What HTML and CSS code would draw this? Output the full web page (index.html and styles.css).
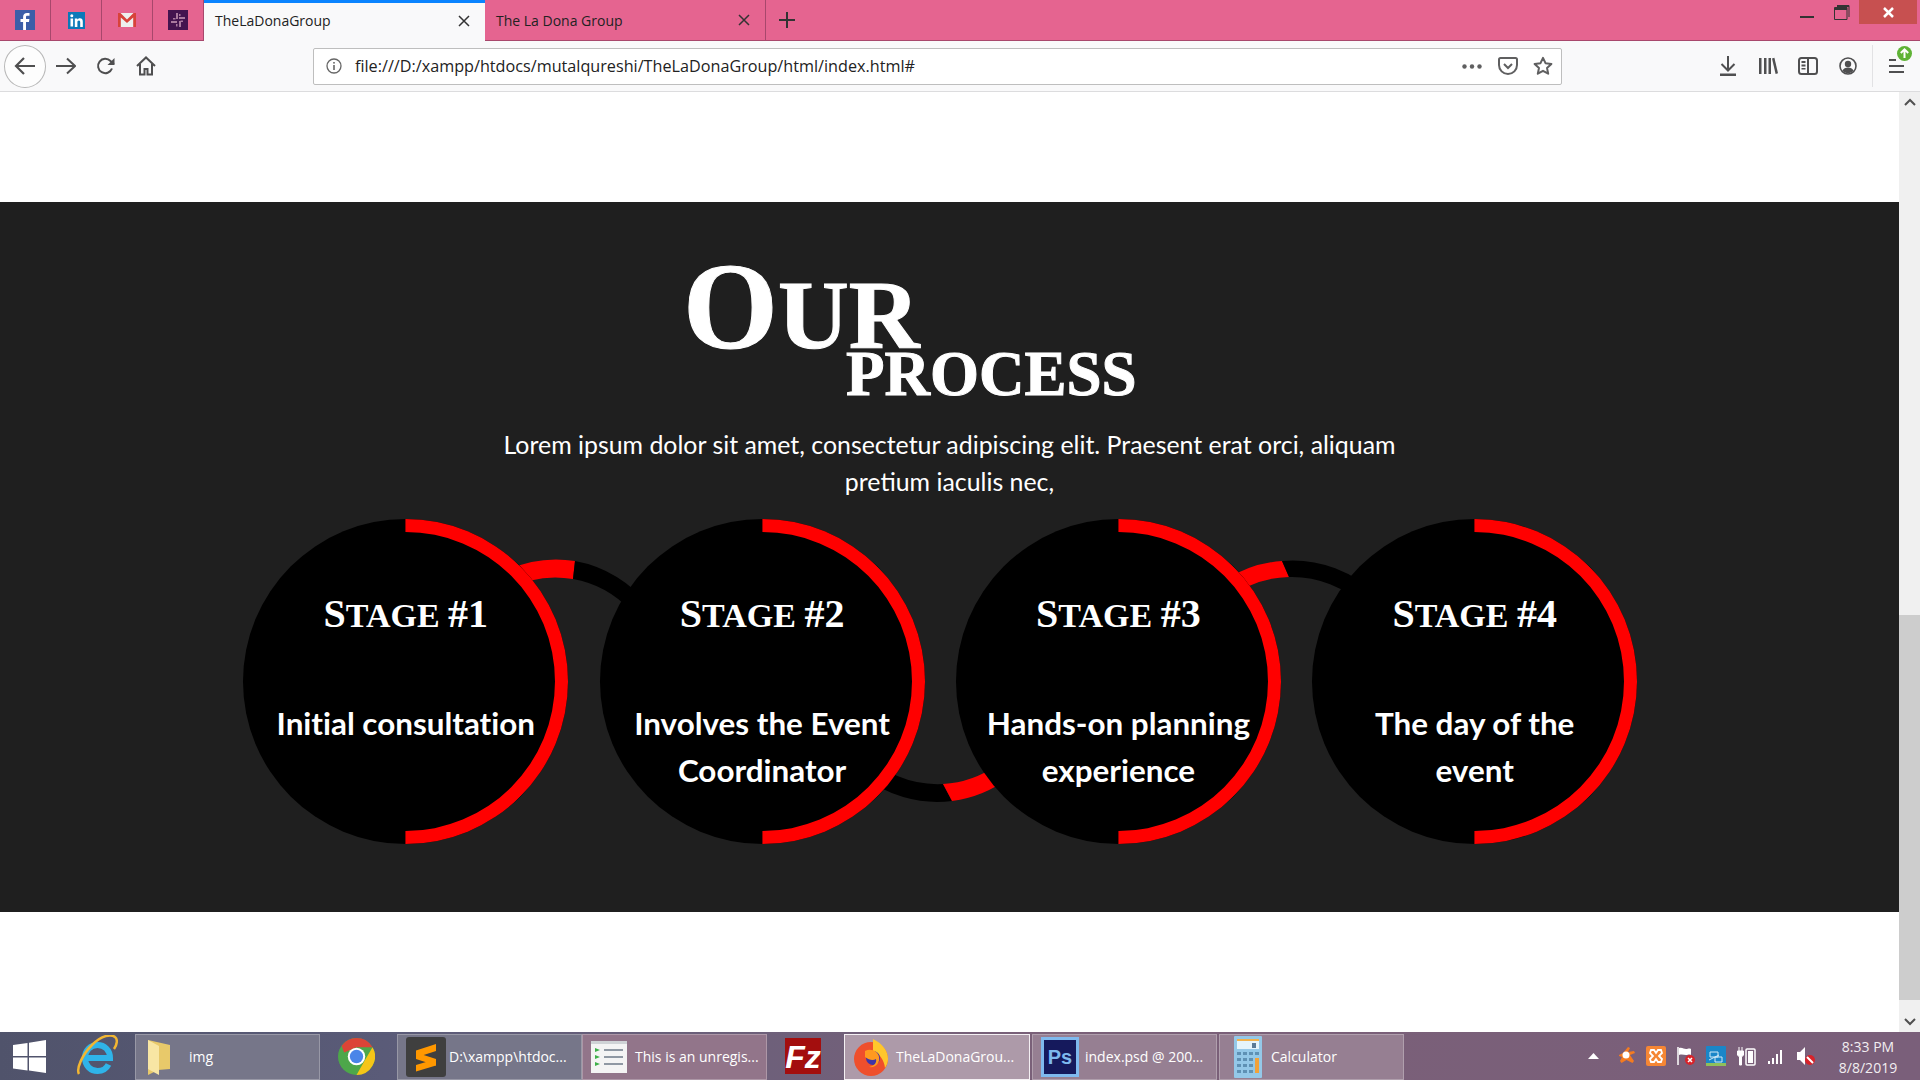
FILE: index.html
```html
<!DOCTYPE html>
<html lang="en">

<head>
    <meta charset="UTF-8" />
    <meta name="viewport" content="width=device-width, initial-scale=1.0" />
    <title>TheLaDonaGroup</title>
    <link rel="stylesheet" href="styles.css">
</head>

<body>
    <div class="page">
        <!-- browser tabs -->
        <div class="tabbar">
            <div class="pinned">
                <svg width="20" height="20" viewBox="0 0 20 20"><rect width="20" height="20" fill="#3b5ea8"/><path d="M11 20v-8h3l.4-3H11V7.200c0-.9.300-1.400 1.500-1.400h2V3.100C14 3 13.100 3 12 3 9.700 3 8.100 4.400 8.100 7v2H5.500v3h2.600v8z" fill="#fff"/></svg>
            </div>
            <div class="pinned">
                <svg width="17" height="17" viewBox="0 0 17 17"><rect width="17" height="17" fill="#0b79b8"/><rect x="2.500" y="6.500" width="2.600" height="8" fill="#fff"/><circle cx="3.800" cy="3.800" r="1.500" fill="#fff"/><path d="M6.800 6.500h2.500v1.200c.5-.8 1.400-1.400 2.600-1.400 2.200 0 2.900 1.400 2.900 3.500v5.200h-2.600V10.300c0-1-.3-1.800-1.300-1.800-1.100 0-1.500.8-1.500 1.800v4.700H6.800z" fill="#fff"/></svg>
            </div>
            <div class="pinned">
                <svg width="18" height="14" viewBox="0 0 18 14"><rect width="18" height="14" fill="#eee"/><path d="M0 0h2.500L9 6.500 15.500 0H18v14h-2.800V4.500L9 10 2.800 4.500V14H0z" fill="#d8423a"/></svg>
            </div>
            <div class="pinned">
                <svg width="20" height="20" viewBox="0 0 20 20"><rect width="20" height="20" fill="#43134f"/><g fill="#a9799f"><rect x="8" y="3" width="2" height="6"/><rect x="11" y="11" width="2" height="6"/><rect x="3" y="11" width="6" height="2"/><rect x="11" y="7" width="6" height="2"/><rect x="5" y="8" width="2.500" height="1.500"/><rect x="12.500" y="10.500" width="2.500" height="1.500"/><rect x="8" y="14" width="1.500" height="2.500"/><rect x="11" y="4" width="1.500" height="2"/></g></svg>
            </div>
            <div class="tab tab-active">
                <span class="tab-title">TheLaDonaGroup</span>
                <svg class="tab-close" width="12" height="12" viewBox="0 0 12 12"><path d="M1 1l10 10M11 1L1 11" stroke="#333" stroke-width="1.500"/></svg>
            </div>
            <div class="tab">
                <span class="tab-title">The La Dona Group</span>
                <svg class="tab-close" width="12" height="12" viewBox="0 0 12 12"><path d="M1 1l10 10M11 1L1 11" stroke="#333" stroke-width="1.500"/></svg>
            </div>
            <div class="new-tab">
                <svg width="18" height="18" viewBox="0 0 18 18"><path d="M9 1v16M1 9h16" stroke="#333" stroke-width="2"/></svg>
            </div>
            <div class="window-controls">
                <svg class="win-min" width="14" height="2" viewBox="0 0 14 2"><rect width="14" height="2" fill="#333"/></svg>
                <svg class="win-max" width="16" height="16" viewBox="0 0 16 16"><path d="M3 1.500h12V13M.5 3.500h12.500v12H.5z" fill="none" stroke="#333"/><rect x="1" y="4" width="12" height="2" fill="#333"/><rect x="3" y="1" width="12" height="2" fill="#333"/></svg>
                <div class="win-close">
                    <svg width="11" height="11" viewBox="0 0 11 11"><path d="M1 1l9 9M10 1l-9 9" stroke="#fff" stroke-width="2.500"/></svg>
                </div>
            </div>
        </div>

        <!-- address bar -->
        <div class="toolbar">
            <div class="back-btn">
                <svg width="22" height="20" viewBox="0 0 22 20"><path d="M10 2L2 10l8 8M2 10h19" fill="none" stroke="#4f4f50" stroke-width="2.200"/></svg>
            </div>
            <div class="tool-icon">
                <svg width="20" height="18" viewBox="0 0 20 18"><path d="M11 1.500L19 9l-8 7.500M19 9H0" fill="none" stroke="#4f4f50" stroke-width="2"/></svg>
            </div>
            <div class="tool-icon">
                <svg width="20" height="20" viewBox="0 0 20 20"><path d="M16 12.500A7.200 7.200 0 1 1 14.500 5L18 8" fill="none" stroke="#4f4f50" stroke-width="2"/><path d="M18.500 2v7h-7z" fill="#4f4f50"/></svg>
            </div>
            <div class="tool-icon">
                <svg width="20" height="20" viewBox="0 0 20 20"><path d="M1 10l9-8.500 9 8.500M4 8v10.500h4.500V13h3v5.500H16V8" fill="none" stroke="#4f4f50" stroke-width="2"/></svg>
            </div>

            <div class="urlbar">
                <svg class="url-info" width="16" height="16" viewBox="0 0 16 16"><circle cx="8" cy="8" r="7" fill="none" stroke="#666" stroke-width="1.300"/><rect x="7.200" y="7" width="1.600" height="5" fill="#666"/><rect x="7.200" y="4" width="1.600" height="1.600" fill="#666"/></svg>
                <span class="url-text">file:///D:/xampp/htdocs/mutalqureshi/TheLaDonaGroup/html/index.html#</span>
                <svg class="url-dots" width="20" height="5" viewBox="0 0 20 5"><circle cx="2.500" cy="2.500" r="2.200" fill="#5f5f60"/><circle cx="10" cy="2.500" r="2.200" fill="#5f5f60"/><circle cx="17.500" cy="2.500" r="2.200" fill="#5f5f60"/></svg>
                <svg class="url-pocket" width="20" height="18" viewBox="0 0 20 18"><path d="M2.500 1h15c.8 0 1.500.7 1.500 1.500V8c0 5-4 9-9 9S1 13 1 8V2.500C1 1.700 1.700 1 2.500 1z" fill="none" stroke="#5f5f60" stroke-width="2"/><path d="M6 7l4 4 4-4" fill="none" stroke="#5f5f60" stroke-width="2"/></svg>
                <svg class="url-star" width="20" height="20" viewBox="0 0 20 20"><path d="M10 1.800l2.500 5.400 5.900.7-4.400 4 1.200 5.800L10 14.800l-5.200 2.900L6 11.900l-4.400-4 5.900-.7z" fill="none" stroke="#5f5f60" stroke-width="2" stroke-linejoin="round"/></svg>
            </div>

            <div class="tool-right">
                <div class="tool-icon">
                    <svg width="18" height="20" viewBox="0 0 18 20"><path d="M9 0v14M2.500 8L9 14.500 15.500 8" fill="none" stroke="#4f4f50" stroke-width="2"/><rect x="1" y="17.500" width="16" height="2.500" fill="#4f4f50"/></svg>
                </div>
                <div class="tool-icon">
                    <svg width="20" height="18" viewBox="0 0 20 18"><g fill="#4f4f50"><rect x="1" y="1" width="2.500" height="16"/><rect x="6" y="1" width="2.500" height="16"/><rect x="10.500" y="1" width="2.500" height="16"/><path d="M14 1.500l2.400-.7 3.600 15.500-2.400.7z"/></g></svg>
                </div>
                <div class="tool-icon">
                    <svg width="20" height="18" viewBox="0 0 20 18"><rect x="1" y="1" width="18" height="16" rx="2.500" fill="none" stroke="#4f4f50" stroke-width="2"/><rect x="9" y="1" width="2" height="16" fill="#4f4f50"/><path d="M3.500 4h4v2h-4zM3.500 7.500h4v2h-4zM3.500 11h4v1.500h-4z" fill="#4f4f50"/></svg>
                </div>
                <div class="tool-icon">
                    <svg width="18" height="18" viewBox="0 0 18 18"><circle cx="9" cy="9" r="8" fill="none" stroke="#4f4f50" stroke-width="1.600"/><circle cx="9" cy="7" r="3.200" fill="#4f4f50"/><path d="M3.500 13.500c1-2 3-3 5.500-3s4.500 1 5.500 3C13 15.500 11 16 9 16s-4-.5-5.500-2.500z" fill="#4f4f50"/></svg>
                </div>
                <div class="tool-sep"></div>
                <div class="menu-btn">
                    <svg width="16" height="16" viewBox="0 0 16 16"><rect y="1" width="7" height="2" fill="#4f4f50"/><rect y="7" width="15" height="2" fill="#4f4f50"/><rect y="13" width="15" height="2" fill="#4f4f50"/></svg>
                    <svg class="menu-badge" width="15" height="15" viewBox="0 0 15 15"><circle cx="7.500" cy="7.500" r="7.500" fill="#5fb336"/><path d="M7.500 12V3.500M3.800 7l3.700-3.700L11.200 7" fill="none" stroke="#fff" stroke-width="2"/></svg>
                </div>
            </div>
        </div>

        <!-- page -->
        <div class="viewport">
            <div class="content">
                <section class="process">
                    <h2 class="process-title">
                        <span class="title-our"><span class="title-o">O</span>ur</span>
                        <span class="title-process">Process</span>
                    </h2>
                    <p class="process-text">Lorem ipsum dolor sit amet, consectetur adipiscing elit. Praesent erat orci, aliquam<br>pretium iaculis nec,</p>

                    <div class="stages">
                        <!-- arcs running behind the circles -->
                        <svg class="links" width="1400" height="330" viewBox="243 519 1400 330">
                            <path d="M505 571A121 121 0 0 1 575 561L573 579A103 103 0 0 0 505 591Z" fill="#f00"/>
                            <path d="M575 561A121 121 0 0 1 650 607L630 610A103 103 0 0 0 573 579Z" fill="#000"/>
                            <path d="M860 774A121 121 0 0 0 952 801L943 784A103 103 0 0 1 860 749Z" fill="#000"/>
                            <path d="M952 801A121 121 0 0 0 1010 777L997 765A103 103 0 0 1 943 784Z" fill="#f00"/>
                            <path d="M1225 580A121 121 0 0 1 1282 561L1289 577A104 104 0 0 0 1225 601Z" fill="#f00"/>
                            <path d="M1282 561A121 121 0 0 1 1380 598L1365 607A104 104 0 0 0 1289 577Z" fill="#000"/>
                        </svg>

                        <div class="stage">
                            <h3 class="stage-title"><span class="cap">S</span>tage <span class="cap">#1</span></h3>
                            <p class="stage-text">Initial consultation</p>
                        </div>
                        <div class="stage">
                            <h3 class="stage-title"><span class="cap">S</span>tage <span class="cap">#2</span></h3>
                            <p class="stage-text">Involves the Event Coordinator</p>
                        </div>
                        <div class="stage">
                            <h3 class="stage-title"><span class="cap">S</span>tage <span class="cap">#3</span></h3>
                            <p class="stage-text">Hands-on planning experience</p>
                        </div>
                        <div class="stage">
                            <h3 class="stage-title"><span class="cap">S</span>tage <span class="cap">#4</span></h3>
                            <p class="stage-text">The day of the event</p>
                        </div>
                    </div>
                </section>
            </div>
            <div class="scrollbar">
                <div class="scroll-arrow"><svg width="12" height="8" viewBox="0 0 12 8"><path d="M1 7l5-5 5 5" fill="none" stroke="#505050" stroke-width="2"/></svg></div>
                <div class="scroll-track"><div class="scroll-thumb"></div></div>
                <div class="scroll-arrow"><svg width="12" height="8" viewBox="0 0 12 8"><path d="M1 1l5 5 5-5" fill="none" stroke="#505050" stroke-width="2"/></svg></div>
            </div>
        </div>

        <!-- windows taskbar -->
        <div class="taskbar">
            <div class="task-start">
                <svg width="33" height="33" viewBox="0 0 33 33"><path d="M0 5l14.500-2v13H0zM16 2.800L33 0v16H16zM0 17.500h14.500v13L0 28.500zM16 17.500h17V33l-17-2.500z" fill="#fff"/></svg>
            </div>
            <div class="task-pin task-pin-ie">
                <svg width="42" height="42" viewBox="0 0 42 42"><path d="M9 23h25c0-8-5.500-13-12.500-13S9 15.500 9 23s5.500 13 12.500 13c5 0 9-2.500 11-6.500" fill="none" stroke="#2fb4e9" stroke-width="6"/><path d="M3 39C0 34 6 20 16 10S35-1 39 2c3 2 2 8-1 12" fill="none" stroke="#f2b632" stroke-width="2.500"/></svg>
            </div>
            <div class="task-item task-item-dark task-img">
                <svg width="28" height="36" viewBox="0 0 28 36"><path d="M2 1l22 5v24l-12 1-10 5z" fill="#e8c96a"/><path d="M2 1l11 6v29L2 30z" fill="#f8e6a4"/></svg>
                <span>img</span>
            </div>
            <div class="task-pin task-pin-chrome">
                <svg width="37" height="37" viewBox="0 0 36 36"><circle cx="18" cy="18" r="18" fill="#4da74a"/><path d="M18 0a18 18 0 0 1 15.600 9L18 9 6 14 3.500 7.500A18 18 0 0 1 18 0z" fill="#dc4437"/><path d="M33.600 9A18 18 0 0 1 18 36l8-14z" fill="#f5c518"/><circle cx="18" cy="18" r="8.500" fill="#fff"/><circle cx="18" cy="18" r="6.500" fill="#4a85e8"/></svg>
            </div>
            <div class="task-item task-item-dark task-sublime">
                <svg width="40" height="40" viewBox="0 0 40 40"><rect width="40" height="40" rx="3" fill="#3f3f3f"/><g fill="#ff9800"><path d="M30 7L10 13.500v7L30 14z"/><path d="M10 15.500l20 6.500v6.500l-20-6.500z"/><path d="M30 22L10 28v6.500l20-6z"/></g></svg>
                <span>D:\xampp\htdoc...</span>
            </div>
            <div class="task-item task-item-mid task-notes">
                <svg width="36" height="32" viewBox="0 0 36 32"><rect width="36" height="32" fill="#f4f4f4"/><rect width="36" height="3" fill="#cfd3d6"/><g fill="#8f98a3"><rect x="13" y="8" width="19" height="2"/><rect x="13" y="15" width="19" height="2"/><rect x="13" y="22" width="19" height="2"/></g><g fill="#3eb04a"><path d="M4 7l5 2-5 2zM4 14l5 2-5 2zM4 21l5 2-5 2z"/></g></svg>
                <span>This is an unregis...</span>
            </div>
            <div class="task-pin task-pin-fz">
                <svg width="36" height="36" viewBox="0 0 36 36"><rect width="36" height="36" fill="#a30e0e"/><text x="18" y="30" class="fz-letters">Fz</text></svg>
            </div>
            <div class="task-item task-item-active">
                <svg width="36" height="38" viewBox="0 0 36 38"><circle cx="18" cy="21" r="17" fill="#ef4f2c"/><path d="M20 1c10 5 15 12 15 20 0 3-1 6-3 9-1-8-5-14-12-17z" fill="#ffc72c"/><circle cx="20" cy="20" r="7" fill="#3f35a8"/><path d="M12 13c6-3 13 0 14 6s-3 11-10 10c5-1 8-4 7-8-3 2-7 1-11-2z" fill="#ff9a1f"/></svg>
                <span>TheLaDonaGrou...</span>
            </div>
            <div class="task-item task-item-light task-ps">
                <svg width="38" height="40" viewBox="0 0 38 40"><rect width="38" height="40" fill="#7fb9ee"/><rect x="3" y="3" width="32" height="34" fill="#15195c"/><text x="19" y="27" class="ps-letters">Ps</text></svg>
                <span>index.psd @ 200...</span>
            </div>
            <div class="task-item task-item-light task-calc">
                <svg width="28" height="42" viewBox="0 0 28 42"><rect width="28" height="42" rx="1" fill="#94c8e8"/><rect x="3" y="3" width="22" height="10" fill="#e5f4fb"/><rect x="3" y="3" width="22" height="2" fill="#f2b24d"/><rect x="18" y="7" width="4" height="5" fill="#5a7a96"/><g fill="#5f91b4"><rect x="3" y="16" width="4" height="3"/><rect x="9" y="16" width="4" height="3"/><rect x="15" y="16" width="4" height="3"/><rect x="21" y="16" width="4" height="3"/><rect x="3" y="22" width="4" height="3"/><rect x="9" y="22" width="4" height="3"/><rect x="15" y="22" width="4" height="3"/><rect x="3" y="28" width="4" height="3"/><rect x="9" y="28" width="4" height="3"/><rect x="15" y="28" width="4" height="3"/><rect x="3" y="34" width="4" height="3"/><rect x="9" y="34" width="4" height="3"/><rect x="15" y="34" width="4" height="3"/></g><rect x="21" y="22" width="4" height="15" fill="#f2a23a"/></svg>
                <span>Calculator</span>
            </div>

            <div class="tray">
                <svg class="tray-arrow" width="11" height="6" viewBox="0 0 11 6"><path d="M5.500 0L11 6H0z" fill="#fff"/></svg>
                <svg class="tray-icon" width="20" height="20" viewBox="0 0 20 20"><path d="M3 9l4-2 5-6 2 1-2 4 6-1 1 2-5 2 4 6-1.500 2-6-3-5 3-1.500-2 2-4-3-1z" fill="#f47b20"/><circle cx="10" cy="9" r="3.500" fill="#fff"/></svg>
                <svg class="tray-icon" width="20" height="20" viewBox="0 0 20 20"><rect width="20" height="20" rx="2" fill="#f58634"/><path d="M5 4h3l2 3 2-3h3l1 3-3 3 3 3-1 3h-3l-2-3-2 3H5l-1-3 3-3-3-3z" fill="none" stroke="#fff" stroke-width="1.800"/></svg>
                <svg class="tray-icon" width="20" height="20" viewBox="0 0 20 20"><path d="M2 1v18" stroke="#fff" stroke-width="1.500"/><path d="M3 2c3-1 5 1 7 1s3-1 5 0v6c-2-1-3 0-5 0s-4-1-7 0z" fill="#fff"/><circle cx="14" cy="14" r="5" fill="#d8232a"/><path d="M12 12l4 4M16 12l-4 4" stroke="#fff" stroke-width="1.500"/></svg>
                <svg class="tray-icon" width="20" height="20" viewBox="0 0 20 20"><rect width="20" height="20" rx="1" fill="#1a86c8"/><path d="M3 14l10-5M4 6h8v5H4zM9 11h7v5H9z" fill="none" stroke="#cfe9f7"/><rect y="17" width="20" height="3" fill="#8fbf5a"/></svg>
                <svg class="tray-icon" width="20" height="20" viewBox="0 0 20 20"><path d="M3 1v4M6 1v4M1.500 5h6v4l-2 2v8H3.500v-8l-2-2z" fill="#fff" stroke="#fff"/><rect x="10" y="3" width="9" height="16" rx="1" fill="none" stroke="#fff" stroke-width="1.500"/><rect x="12" y="5" width="5" height="12" fill="#fff"/></svg>
                <svg class="tray-icon" width="20" height="20" viewBox="0 0 20 20"><path d="M2 15h2v3H2zM6 12h2v6H6zM10 8h2v10h-2zM14 4h2v14h-2z" fill="#fff"/></svg>
                <svg class="tray-icon" width="20" height="20" viewBox="0 0 20 20"><path d="M1 6h3l5-5v18l-5-5H1z" fill="#fff"/><circle cx="14" cy="14" r="5" fill="#d8232a"/><path d="M11 11l6 6" stroke="#fff" stroke-width="2"/></svg>
                <div class="clock">
                    <div>8:33 PM</div>
                    <div>8/8/2019</div>
                </div>
            </div>
        </div>
    </div>
</body>

</html>
```

FILE: styles.css
```css
html, body {
    margin: 0;
    padding: 0;
}

body {
    font-family: "Open Sans", sans-serif;
    background-color: #ffffff;
}

.page {
    width: 1920px;
    height: 1080px;
    overflow: hidden;
    display: flex;
    flex-direction: column;
}

/* tabs */
.tabbar {
    height: 40px;
    flex-shrink: 0;
    display: flex;
    background-color: #e56490;
    border-bottom: 1px solid #a8476c;
}

.pinned {
    width: 50px;
    border-right: 1px solid #a8476c;
    display: flex;
    align-items: center;
    justify-content: center;
}

.tab {
    width: 281px;
    padding: 0 15px 0 11px;
    box-sizing: border-box;
    border-right: 1px solid #a8476c;
    display: flex;
    align-items: center;
    justify-content: space-between;
    font-size: 14px;
    color: #222;
}

.tab-active {
    height: 41px;
    padding-bottom: 3px;
    background-color: #f9f9fa;
    border-top: 3px solid #0a84ff;
    border-right: none;
}

.new-tab {
    width: 42px;
    display: flex;
    align-items: center;
    justify-content: center;
}

.window-controls {
    margin-left: auto;
    display: flex;
    align-items: flex-start;
}

.win-min {
    margin: 16px 20px 0 0;
}

.win-max {
    margin: 4px 9px 0 0;
}

.win-close {
    width: 58px;
    height: 24px;
    margin-right: 3px;
    background-color: #c75050;
    display: flex;
    align-items: center;
    justify-content: center;
}

/* address bar */
.toolbar {
    height: 50px;
    flex-shrink: 0;
    display: flex;
    align-items: center;
    background-color: #f9f9fa;
    border-bottom: 1px solid #dcdcde;
}

.back-btn {
    width: 40px;
    height: 41px;
    margin-left: 4px;
    border: 1px solid #b8b8b8;
    border-radius: 50%;
    background-color: #fdfdfd;
    display: flex;
    align-items: center;
    justify-content: center;
}

.tool-icon {
    width: 40px;
    display: flex;
    align-items: center;
    justify-content: center;
}

.urlbar {
    width: 1247px;
    height: 35px;
    margin-left: 147px;
    background-color: #ffffff;
    border: 1px solid #bebebe;
    border-radius: 2px;
    display: flex;
    align-items: center;
}

.url-info {
    margin-left: 12px;
}

.url-text {
    margin-left: 13px;
    font-size: 16.2px;
    color: #222;
    flex: 1;
}

.url-pocket {
    margin-left: 16px;
}

.url-star {
    margin: 0 8px 0 15px;
}

.tool-right {
    margin-left: 146px;
    display: flex;
    align-items: center;
}

.tool-sep {
    width: 1px;
    height: 42px;
    margin-left: 4px;
    background-color: #e2e2e4;
}

.menu-btn {
    position: relative;
    margin-left: 16px;
    display: flex;
}

.menu-badge {
    position: absolute;
    top: -12px;
    left: 8px;
}

/* page area */
.viewport {
    flex: 1;
    min-height: 0;
    display: flex;
}

.content {
    flex: 1;
    padding-top: 110px;
    background-color: #ffffff;
}

.process {
    height: 710px;
    box-sizing: border-box;
    padding-top: 65px;
    background-color: #1f1f1f;
    color: #ffffff;
}

.process-title {
    margin: 0 0 0 683px;
    font-family: "Liberation Serif", serif;
    font-weight: bold;
    text-transform: uppercase;
    -webkit-text-stroke: 1px #ffffff;
}

.title-our {
    display: block;
    height: 80px;
    font-size: 98px;
    line-height: 80px;
}

.title-o {
    font-size: 122px;
}

.title-process {
    display: block;
    height: 54px;
    margin-left: 163px;
    font-size: 63px;
    line-height: 54px;
}

.process-text {
    margin: 25px 0 0;
    font-family: Lato, sans-serif;
    font-size: 24.9px;
    line-height: 37px;
    text-align: center;
}

.stages {
    position: relative;
    margin: 19px 0 0 243.3px;
    display: flex;
    gap: 31.3px;
}

.links {
    position: absolute;
    top: 0;
    left: 0;
}

.stage {
    position: relative;
    width: 325px;
    height: 325px;
    box-sizing: border-box;
    padding: 70px 20px 0;
    border-radius: 50%;
    background-color: #000000;
    text-align: center;
    flex-shrink: 0;
}

/* red half ring: two borders turned 45deg */
.stage::before {
    content: "";
    position: absolute;
    inset: 0;
    border: 13px solid;
    border-color: #f00 #f00 transparent transparent;
    border-radius: 50%;
    transform: rotate(45deg);
}

.stage-title {
    margin: 0;
    font-family: "Liberation Serif", serif;
    font-size: 34px;
    line-height: 50px;
    font-weight: bold;
    text-transform: uppercase;
}

.cap {
    font-size: 40px;
}

.stage-text {
    position: relative;
    margin: 59px 0 0;
    font-family: Lato, sans-serif;
    font-size: 31.4px;
    line-height: 47px;
    font-weight: bold;
    font-variant-ligatures: none;
}

/* scrollbar */
.scrollbar {
    width: 21px;
    display: flex;
    flex-direction: column;
    background-color: #f0f0f0;
}

.scroll-arrow {
    height: 20px;
    display: flex;
    align-items: center;
    justify-content: center;
}

.scroll-track {
    flex: 1;
    padding-top: 503px;
    box-sizing: border-box;
}

.scroll-thumb {
    height: 385px;
    background-color: #cdcdcd;
}

/* taskbar */
.taskbar {
    height: 48px;
    flex-shrink: 0;
    display: flex;
    align-items: center;
    background: linear-gradient(90deg, #50536b 0%, #5a5b78 20%, #6e607a 40%, #7a6078 55%, #7a5f7a 100%);
    font-size: 14px;
    color: #ffffff;
}

.task-start {
    width: 58px;
    padding-left: 13px;
    box-sizing: border-box;
    display: flex;
}

.task-pin {
    width: 77px;
    display: flex;
    justify-content: center;
}

.task-pin-chrome {
    padding-right: 5px;
    box-sizing: border-box;
}

.task-pin-fz {
    padding-right: 5px;
    box-sizing: border-box;
}

.task-item {
    width: 185px;
    height: 46px;
    margin-top: 1px;
    padding-left: 8px;
    box-sizing: border-box;
    border: 1px solid rgba(255, 255, 255, 0.25);
    display: flex;
    align-items: center;
    gap: 14px;
    overflow: hidden;
    white-space: nowrap;
}

.task-img {
    padding-left: 10px;
    gap: 15px;
}

.task-sublime {
    gap: 3px;
}

.task-notes {
    gap: 8px;
}

.task-ps {
    gap: 6px;
}

.task-calc {
    padding-left: 14px;
    gap: 9px;
}

.task-item-dark {
    background-color: #767689;
}

.task-item-mid {
    background-color: #92758a;
}

.task-item-light {
    background-color: #967f92;
    margin-left: 2px;
}

.task-item-active {
    width: 186px;
    gap: 7px;
    background-color: #ad9aa9;
    border: 1px solid #f4f0f3;
}

.fz-letters {
    font-family: "Liberation Sans", sans-serif;
    font-size: 32px;
    font-weight: bold;
    font-style: italic;
    fill: #ffffff;
    text-anchor: middle;
}

.ps-letters {
    font-family: "Liberation Sans", sans-serif;
    font-size: 20px;
    font-weight: bold;
    fill: #7fb9ee;
    text-anchor: middle;
}

.tray {
    margin-left: auto;
    display: flex;
    align-items: center;
}

.tray-arrow {
    margin-right: 17px;
}

.tray-icon {
    margin-right: 10px;
}

.clock {
    width: 90px;
    margin: 1px 7px 0 -3px;
    text-align: center;
    font-size: 14px;
    line-height: 21px;
    color: #f2eef1;
}
```
